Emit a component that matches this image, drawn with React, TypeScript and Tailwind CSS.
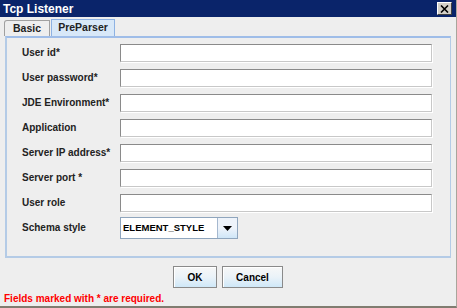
import React from 'react';

const fields = [
  'User id*',
  'User password*',
  'JDE Environment*',
  'Application',
  'Server IP address*',
  'Server port *',
  'User role',
];

function TextField() {
  return (
    <div className="h-[18px] w-[312px] bg-white border border-[#c8c8c8] border-t-[#8a8a8a] border-l-[#8a8a8a] shadow-[1px_1px_0_#ffffff]" />
  );
}

export default function App() {
  return (
    <div className="w-[457px] h-[308px] bg-[#eeeeee] flex flex-col font-['Liberation_Sans',Arial,sans-serif] border-b-2 border-[#807c70] border-r border-r-[#a9a59b] overflow-hidden">
      {/* title bar */}
      <div className="h-[17px] bg-[#0a246a] flex items-center justify-between pl-[3px] pr-[4px] shrink-0">
        <span className="text-white text-[12px] font-bold leading-none">Tcp Listener</span>
        <div className="w-[15px] h-[13px] bg-[#d4d0c8] border border-white border-r-[#404040] border-b-[#404040] flex items-center justify-center">
          <svg width="9" height="8" viewBox="0 0 9 8">
            <path d="M1 0.5 L8 7.5 M8 0.5 L1 7.5" stroke="#000" strokeWidth="1.6" />
          </svg>
        </div>
      </div>

      {/* tabs */}
      <div className="flex items-end pl-[4px] pt-[2px] h-[19px] shrink-0">
        <div className="w-[46px] h-[16px] flex items-center justify-center border border-b-0 border-[#a0a0a0] rounded-tl-[3px] bg-[#eeeeee] text-[10.5px] font-bold text-[#222]">
          Basic
        </div>
        <div className="w-[64px] h-[17px] ml-px flex items-center justify-center border border-b-0 border-[#8db2e3] bg-[#d8e8f8] text-[10.5px] font-bold text-[#222]">
          PreParser
        </div>
      </div>

      {/* panel */}
      <div className="mx-[5px] h-[222px] shrink-0 border-2 border-[#b4cbe6] border-t-[#9fbde8] border-r border-r-[#b4cbe6] flex flex-col pl-[15px] pt-[6px] gap-[7px]">
        {fields.map((f) => (
          <div key={f} className="flex items-center h-[18px]">
            <span className="w-[98px] text-[10px] font-bold text-[#222] leading-none">{f}</span>
            <TextField />
          </div>
        ))}
        <div className="flex items-center h-[22px] -mt-[2px]">
          <span className="w-[98px] text-[10px] font-bold text-[#222] leading-none">Schema style</span>
          <div className="h-[22px] w-[118px] flex border border-[#8fa5bd] bg-white">
            <div className="flex-1 flex items-center pl-[2px] text-[9.5px] font-bold text-black">ELEMENT_STYLE</div>
            <div className="w-[20px] border-l border-[#a5b8cf] bg-gradient-to-b from-[#eef3fa] via-[#eef3fa] to-[#cfe6f7] flex items-center justify-center">
              <svg width="9" height="5" viewBox="0 0 9 5">
                <path d="M0 0 H9 L4.5 5 Z" fill="#000" />
              </svg>
            </div>
          </div>
        </div>
      </div>

      {/* buttons */}
      <div className="flex justify-center gap-[5px] mt-[8px] shrink-0">
        <button className="w-[44px] h-[22px] border border-[#8a8a8a] bg-gradient-to-b from-[#f7f7f7] via-[#eaf2f8] to-[#cfe8f8] text-[10px] font-bold text-black shadow-[inset_1px_1px_0_#fff]">
          OK
        </button>
        <button className="w-[61px] h-[22px] border border-[#8a8a8a] bg-gradient-to-b from-[#f7f7f7] via-[#eaf2f8] to-[#cfe8f8] text-[10px] font-bold text-black shadow-[inset_1px_1px_0_#fff]">
          Cancel
        </button>
      </div>

      {/* footer */}
      <div className="pl-[4px] mt-[6px] text-[10px] font-bold text-[#ff0000] leading-none">
        Fields marked with * are required.
      </div>
    </div>
  );
}
